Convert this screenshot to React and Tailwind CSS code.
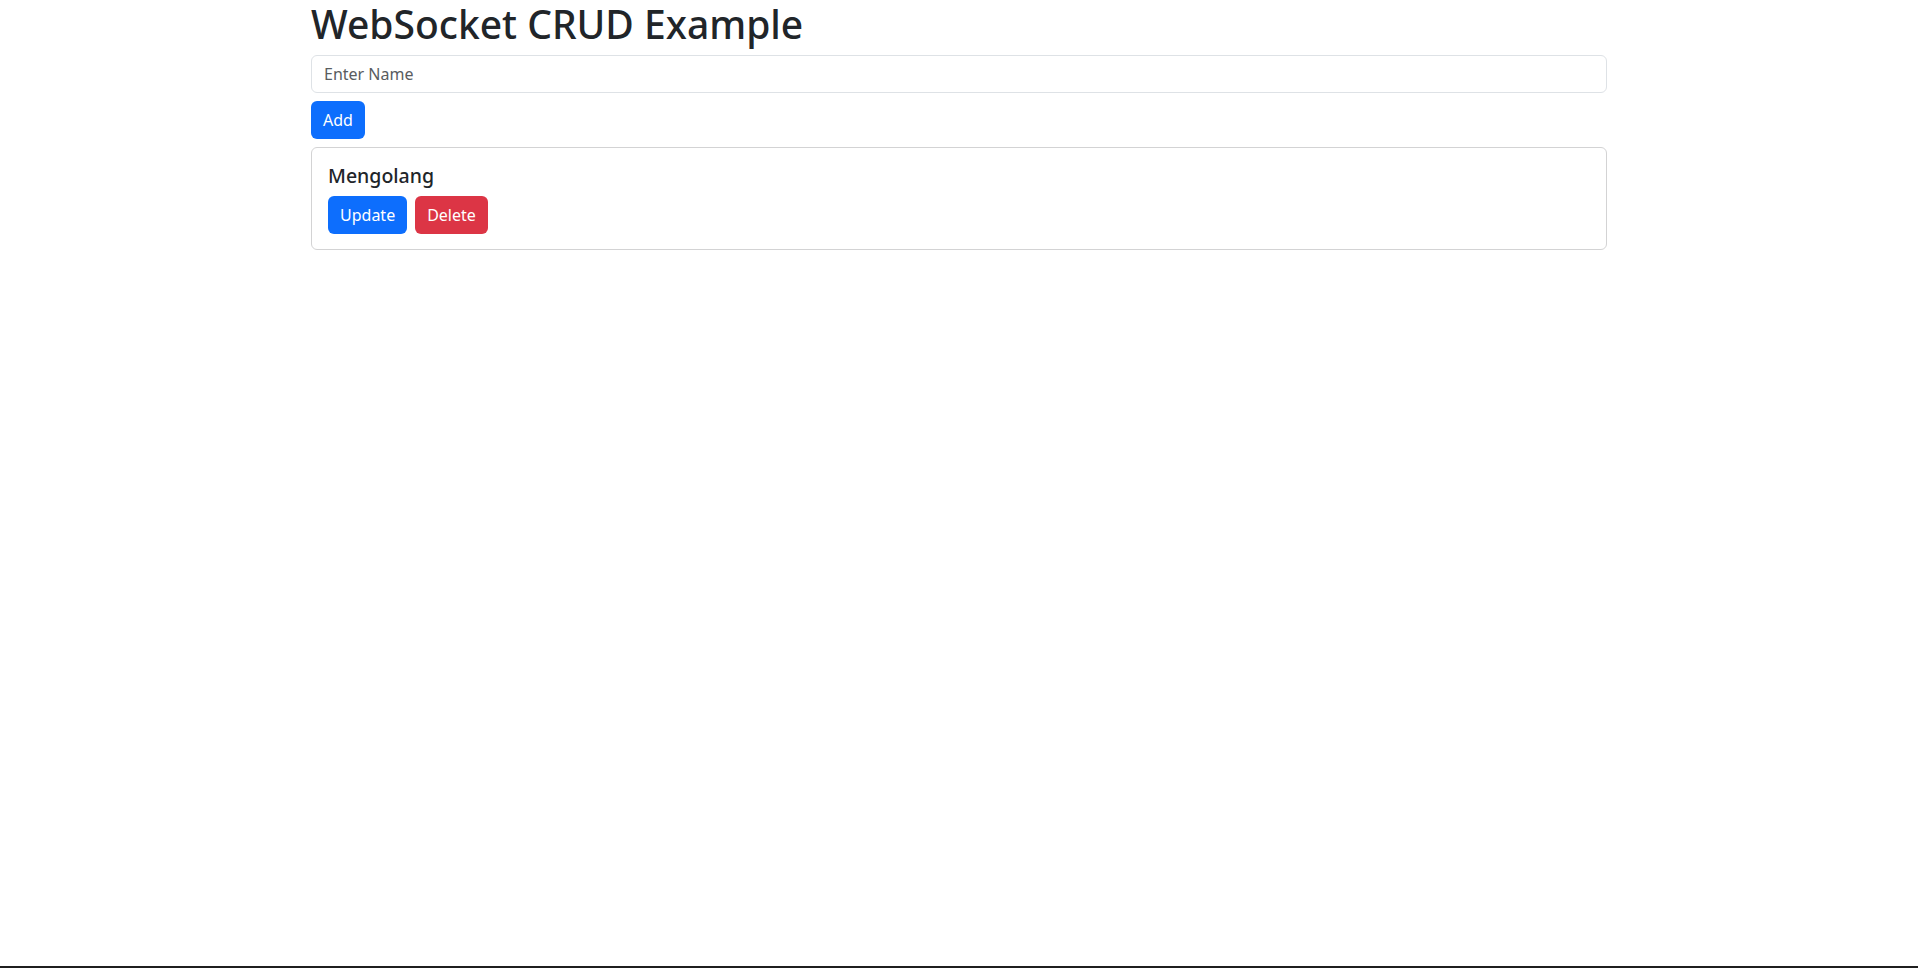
import { useState } from "react";

const App = () => {
  const [name, setName] = useState("");
  const [items] = useState([{ id: 1, name: "Mengolang" }]);

  return (
    <div
      className="min-h-screen flex flex-col bg-white text-[#212529]"
      style={{ fontFamily: '"Noto Sans", "Open Sans", sans-serif' }}
    >
      <div className="w-[1296px] mx-auto">
        <h1 className="text-[39px] leading-[47px] font-medium mb-2">
          WebSocket CRUD Example
        </h1>

        <input
          type="text"
          value={name}
          onChange={(e) => setName(e.target.value)}
          placeholder="Enter Name"
          className="block w-full h-[38px] px-3 mb-2 text-base border border-[#dee2e6] rounded-md placeholder:text-[#595c5f] outline-none"
        />

        <button className="block h-[38px] px-3 mb-2 text-base text-white bg-[#0d6efd] rounded-md">
          Add
        </button>

        {items.map((item) => (
          <div
            key={item.id}
            className="border border-[#d3d3d4] rounded-md px-4 pt-4 pb-[15px]"
          >
            <h5 className="text-[19.5px] leading-[24px] font-medium mb-2">
              {item.name}
            </h5>
            <div className="flex gap-2">
              <button className="h-[38px] px-3 text-base text-white bg-[#0d6efd] rounded-md">
                Update
              </button>
              <button className="h-[38px] px-3 text-base text-white bg-[#dc3545] rounded-md">
                Delete
              </button>
            </div>
          </div>
        ))}
      </div>

      <div className="mt-auto h-[2px] bg-[#1f1f1f]" />
    </div>
  );
};

export default App;
